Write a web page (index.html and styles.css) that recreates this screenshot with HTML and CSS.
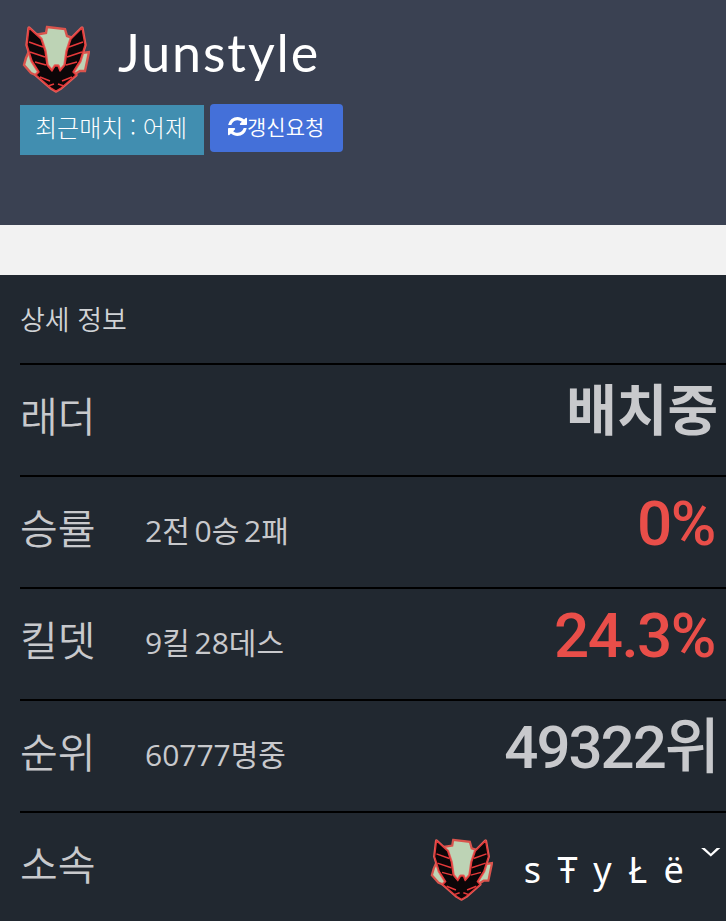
FILE: index.html
```html
<!DOCTYPE html>
<html lang="ko">
<head>
    <meta charset="UTF-8">
    <title>Junstyle</title>
    <link rel="stylesheet" href="styles.css">
</head>
<body>
    <svg class="defs" width="0" height="0">
        <symbol id="emblem" viewBox="12 10 68 70">
            <polygon points="37,12 55,14 57,21 63,23 66,33 72,38 79,37 75,56 70,56 60,62 46,70 30,62 21,58 14,50 16,43 20,34 24,20 36,18" fill="#bdd3b5" stroke="#d9544d" stroke-width="2.4"/>
            <path d="M19 13 L31 24 L35 36 L37 50 L42 56 L45 51 L48 51 L50 56 L55 50 L57 36 L61 24 L72 13 L75 30 L70 46 L63 57 L66 60 L58 67 L51 73 L46 76 L41 73 L34 67 L26 60 L29 57 L22 46 L17 30 Z" fill="#0c0608" stroke="#e0605a" stroke-width="3.4" stroke-linejoin="round"/>
            <path d="M19 13 L31 24 L35 36 L37 50 L42 56 L45 51 L48 51 L50 56 L55 50 L57 36 L61 24 L72 13 L75 30 L70 46 L63 57 L66 60 L58 67 L51 73 L46 76 L41 73 L34 67 L26 60 L29 57 L22 46 L17 30 Z" fill="#0c0608" stroke="#e5393a" stroke-width="1.4" stroke-linejoin="round"/>
            <path d="M19 27 L33 32 M20 37 L35 42 M25 47 L36 50 M73 27 L59 32 M72 37 L57 42 M67 47 L56 50 M30 62 L40 66 M62 62 L52 66 M38 71 L44 69 M54 71 L48 69" stroke="#e5393a" stroke-width="1.6" fill="none"/>
        </symbol>
    </svg>

    <header class="top">
        <div class="profile">
            <svg class="emblem"><use href="#emblem"/></svg>
            <h1 class="name">Junstyle</h1>
        </div>
        <div class="actions">
            <span class="last-match">최근매치 : 어제</span>
            <button class="refresh">
                <svg class="refresh-icon" viewBox="0 0 1536 1536"><path fill="currentColor" d="M1511 928q0 5-1 7-64 268-268 434.5t-478 166.5q-146 0-282.5-55t-243.5-157l-129 129q-19 19-45 19t-45-19-19-45v-448q0-26 19-45t45-19h448q26 0 45 19t19 45-19 45l-137 137q71 66 161 102t187 36q134 0 250-65t186-179q11-17 53-117 8-23 30-23h192q13 0 22.5 9.5t9.5 22.5zm25-800v448q0 26-19 45t-45 19h-448q-26 0-45-19t-19-45 19-45l138-138q-148-137-349-137-134 0-250 65t-186 179q-11 17-53 117-8 23-30 23h-199q-13 0-22.5-9.5t-9.5-22.5v-7q65-268 270-434.5t480-166.5q146 0 284 55.5t245 156.5l130-129q19-19 45-19t45 19 19 45z"/></svg>갱신요청
            </button>
        </div>
    </header>

    <main class="detail">
        <h2 class="detail-title">상세 정보</h2>

        <div class="row">
            <span class="label">래더</span>
            <span class="value hangul">배치중</span>
        </div>
        <div class="row">
            <span class="label">승률</span>
            <span class="sub">2전 0승 2패</span>
            <span class="value bad">0%</span>
        </div>
        <div class="row">
            <span class="label">킬뎃</span>
            <span class="sub">9킬 28데스</span>
            <span class="value bad">24.3%</span>
        </div>
        <div class="row">
            <span class="label">순위</span>
            <span class="sub">60777명중</span>
            <span class="value">49322위</span>
        </div>
        <div class="row">
            <span class="label">소속</span>
            <span class="clan">
                <svg class="emblem clan-emblem"><use href="#emblem"/></svg>
                <span class="clan-name">sŦyŁë<span class="clan-mark">ˇ</span></span>
            </span>
        </div>
    </main>
</body>
</html>
```

FILE: styles.css
```css
body {
    font-family: "Noto Sans CJK KR", "Noto Sans", sans-serif;
    background-color: #f2f2f2;
    margin: 0;
    padding: 0;
    overflow: hidden;
}

.defs {
    display: block;
}

.top {
    background-color: #3a4152;
    height: 225px;
    box-sizing: border-box;
    padding: 25px 0 0 20px;
}

.profile {
    display: flex;
    align-items: center;
    height: 70px;
    padding-left: 2px;
}

.emblem {
    width: 68px;
    height: 70px;
    flex-shrink: 0;
    filter: blur(0.7px);
}

.name {
    margin: 0 0 16px 28px;
    font-family: Lato, "Noto Sans", sans-serif;
    font-size: 52px;
    font-weight: 400;
    letter-spacing: 1.9px;
    line-height: 60px;
    color: white;
}

.actions {
    display: flex;
    align-items: flex-start;
    gap: 6px;
    margin-top: 9px;
}

.last-match {
    width: 184px;
    height: 50px;
    padding-right: 2px;
    box-sizing: border-box;
    background-color: #418eb0;
    color: white;
    font-size: 24px;
    font-weight: 300;
    line-height: 44px;
    text-align: center;
    margin-top: 1px;
}

.refresh {
    display: flex;
    align-items: center;
    width: 133px;
    height: 48px;
    padding: 0 0 4px 18px;
    background-color: #4470d9;
    color: white;
    font-family: inherit;
    font-size: 21px;
    font-weight: 350;
    border: none;
    border-radius: 4px;
}

.refresh-icon {
    width: 19px;
    height: 19px;
}

.detail {
    background-color: #212830;
    margin-top: 50px;
    padding: 0 0 0 20px;
    height: 646px;
}

.detail-title {
    margin: 0;
    height: 88px;
    font-size: 27px;
    font-weight: 350;
    line-height: 88px;
    color: #d0d3d6;
}

.row {
    display: flex;
    align-items: center;
    box-sizing: content-box;
    height: 98px;
    padding-bottom: 12px;
    border-top: 2px solid #000;
    color: #c8c9cc;
}

.label {
    width: 125px;
    font-size: 41px;
    font-weight: 350;
    line-height: 60px;
}

.sub {
    font-family: "Open Sans", "Noto Sans CJK KR", sans-serif;
    font-size: 30px;
    font-weight: 400;
    word-spacing: -3px;
    line-height: 40px;
    margin-top: 10px;
}

.value {
    margin-left: auto;
    margin-right: 8px;
    margin-bottom: 4px;
    font-family: Roboto, "Noto Sans CJK KR", sans-serif;
    font-size: 60px;
    font-weight: 500;
    letter-spacing: -2px;
    line-height: 70px;
}

.hangul {
    font-size: 55px;
    font-weight: 700;
    letter-spacing: 0;
    margin-right: 8px;
    margin-bottom: 6px;
}

.bad {
    color: #e94e49;
    font-size: 62px;
    letter-spacing: -1.5px;
    margin-right: 11px;
}

.clan {
    display: flex;
    align-items: center;
    margin-left: auto;
}

.clan-emblem {
    width: 63px;
    height: 65px;
    margin-top: 16px;
}

.clan-name {
    margin-left: 31px;
    color: white;
    font-family: "Noto Sans", sans-serif;
    font-size: 36px;
    letter-spacing: 16.5px;
}

.clan-mark {
    display: inline-block;
    font-family: "Noto Sans CJK KR", sans-serif;
    font-weight: 400;
    letter-spacing: 0;
    margin-right: 4px;
    vertical-align: 11px;
    transform: scale(1.05, 0.6);
}
```
